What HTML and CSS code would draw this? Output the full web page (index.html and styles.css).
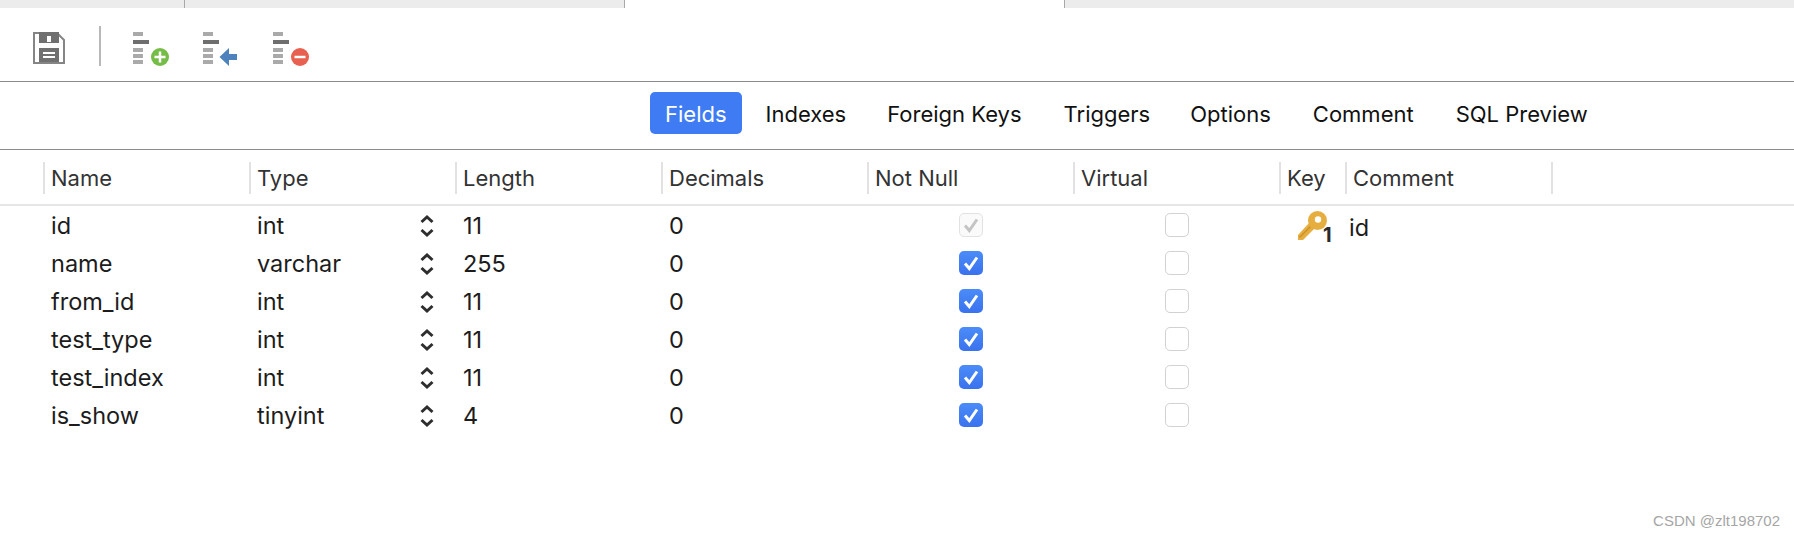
FILE: index.html
```html
<!DOCTYPE html>
<html lang="en">
<head>
    <meta charset="UTF-8">
    <meta name="viewport" content="width=device-width, initial-scale=1.0">
    <title>Table Design</title>
    <link rel="stylesheet" href="styles.css">
</head>
<body>
    <!-- shared icons -->
    <svg class="sprite" width="0" height="0">
        <defs>
            <symbol id="stepper" viewBox="0 0 16 24">
                <path d="M2.500 8 8 3l5.500 5M2.500 16 8 21l5.500-5" fill="none" stroke="#2e2e2e" stroke-width="3"/>
            </symbol>
            <symbol id="check" viewBox="0 0 24 24">
                <path d="M6 12.500 10.300 17.500 18 6.500" fill="none" stroke="currentColor" stroke-width="3"/>
            </symbol>
            <symbol id="bars" viewBox="0 0 16 32">
                <rect x="0" y="0" width="10" height="4" fill="#aaa"/>
                <rect x="0" y="8" width="16" height="4" fill="#6e6e6e"/>
                <rect x="0" y="16" width="10" height="4" fill="#aaa"/>
                <rect x="0" y="22" width="10" height="4" fill="#aaa"/>
                <rect x="0" y="28" width="10" height="4" fill="#aaa"/>
            </symbol>
        </defs>
    </svg>

    <div class="tab-strip">
        <div class="doc-tab tab-a"></div>
        <div class="doc-tab tab-b"></div>
        <div class="doc-tab active tab-c"></div>
        <div class="doc-tab tab-d"></div>
    </div>

    <div class="toolbar">
        <svg class="tool save" width="32" height="32" viewBox="0 0 32 32">
            <path d="M1 1H24L31 8V31H1Z" fill="#fff" stroke="#858585" stroke-width="2"/>
            <rect x="6" y="0" width="20" height="11" fill="#707070"/>
            <rect x="14" y="4" width="4" height="6" fill="#fff"/>
            <rect x="6" y="16" width="20" height="14" fill="#707070"/>
            <rect x="10" y="20" width="12" height="2" fill="#fff"/>
            <rect x="10" y="24" width="12" height="2" fill="#fff"/>
        </svg>
        <div class="tool-sep"></div>
        <svg class="tool add" width="36" height="34" viewBox="0 0 36 34">
            <use href="#bars" width="16" height="32"/>
            <circle cx="27" cy="25" r="9" fill="#76bd48"/>
            <path d="M27 19.500v11M21.500 25h11" stroke="#fff" stroke-width="2.500"/>
        </svg>
        <svg class="tool insert" width="34" height="34" viewBox="0 0 34 34">
            <use href="#bars" width="16" height="32"/>
            <path d="M16.500 25 26 16V22H34V28H26V34Z" fill="#4d82bd"/>
        </svg>
        <svg class="tool remove" width="36" height="34" viewBox="0 0 36 34">
            <use href="#bars" width="16" height="32"/>
            <circle cx="27" cy="25" r="9" fill="#e8604f"/>
            <path d="M21.500 25h11" stroke="#fff" stroke-width="2.500"/>
        </svg>
    </div>

    <div class="tab-bar">
        <div class="tab active">Fields</div>
        <div class="tab">Indexes</div>
        <div class="tab">Foreign Keys</div>
        <div class="tab">Triggers</div>
        <div class="tab">Options</div>
        <div class="tab">Comment</div>
        <div class="tab">SQL Preview</div>
    </div>

    <div class="grid-head">
        <div class="head-cell">Name</div>
        <div class="head-cell">Type</div>
        <div class="head-cell">Length</div>
        <div class="head-cell">Decimals</div>
        <div class="head-cell">Not Null</div>
        <div class="head-cell">Virtual</div>
        <div class="head-cell">Key</div>
        <div class="head-cell comment-head">Comment</div>
    </div>

    <div class="grid-body">
        <div class="row">
            <div class="cell">id</div>
            <div class="cell type-cell">int<svg class="stepper" width="16" height="24"><use href="#stepper"/></svg></div>
            <div class="cell">11</div>
            <div class="cell">0</div>
            <div class="cell center"><span class="box disabled"><svg width="24" height="24"><use href="#check"/></svg></span></div>
            <div class="cell center"><span class="box"></span></div>
            <div class="cell key-cell">
                <svg width="30" height="30" viewBox="0 0 30 30">
                    <path d="M12 11 0 24V29H5L18 16Z" fill="#e5ae3e"/>
                    <path d="M1.500 26.500 14 14" stroke="#c98f28" stroke-width="1.200"/>
                    <circle cx="19.500" cy="9.500" r="9.500" fill="#e5ae3e"/>
                    <circle cx="20" cy="8.500" r="3.200" fill="#fff"/>
                </svg>
                <span class="key-num">1</span>
            </div>
            <div class="cell comment-cell">id</div>
        </div>
        <div class="row">
            <div class="cell">name</div>
            <div class="cell type-cell">varchar<svg class="stepper" width="16" height="24"><use href="#stepper"/></svg></div>
            <div class="cell">255</div>
            <div class="cell">0</div>
            <div class="cell center"><span class="box checked"><svg width="24" height="24"><use href="#check"/></svg></span></div>
            <div class="cell center"><span class="box"></span></div>
        </div>
        <div class="row">
            <div class="cell">from_id</div>
            <div class="cell type-cell">int<svg class="stepper" width="16" height="24"><use href="#stepper"/></svg></div>
            <div class="cell">11</div>
            <div class="cell">0</div>
            <div class="cell center"><span class="box checked"><svg width="24" height="24"><use href="#check"/></svg></span></div>
            <div class="cell center"><span class="box"></span></div>
        </div>
        <div class="row">
            <div class="cell">test_type</div>
            <div class="cell type-cell">int<svg class="stepper" width="16" height="24"><use href="#stepper"/></svg></div>
            <div class="cell">11</div>
            <div class="cell">0</div>
            <div class="cell center"><span class="box checked"><svg width="24" height="24"><use href="#check"/></svg></span></div>
            <div class="cell center"><span class="box"></span></div>
        </div>
        <div class="row">
            <div class="cell">test_index</div>
            <div class="cell type-cell">int<svg class="stepper" width="16" height="24"><use href="#stepper"/></svg></div>
            <div class="cell">11</div>
            <div class="cell">0</div>
            <div class="cell center"><span class="box checked"><svg width="24" height="24"><use href="#check"/></svg></span></div>
            <div class="cell center"><span class="box"></span></div>
        </div>
        <div class="row">
            <div class="cell">is_show</div>
            <div class="cell type-cell">tinyint<svg class="stepper" width="16" height="24"><use href="#stepper"/></svg></div>
            <div class="cell">4</div>
            <div class="cell">0</div>
            <div class="cell center"><span class="box checked"><svg width="24" height="24"><use href="#check"/></svg></span></div>
            <div class="cell center"><span class="box"></span></div>
        </div>
    </div>

    <div class="watermark">CSDN @zlt198702</div>
</body>
</html>
```

FILE: styles.css
```css
html, body {
    height: 100%;
}
body {
    font-family: Inter, "Open Sans", sans-serif;
    font-size: 22px;
    color: #1c1c1c;
    margin: 0;
    padding: 0;
    background-color: #fff;
    overflow: hidden;
}
.sprite {
    display: block;
    height: 0;
}

/* window tabs along the top */
.tab-strip {
    display: flex;
    height: 8px;
    background-color: #ececec;
}
.doc-tab {
    border-right: 1px solid #a8a8a8;
}
.doc-tab.active {
    background-color: #fff;
}
.tab-a {
    width: 184px;
}
.tab-b {
    width: 439px;
}
.tab-c {
    width: 439px;
}
.tab-d {
    flex: 1;
    border-right: none;
}

.toolbar {
    display: flex;
    align-items: flex-start;
    height: 74px;
    box-sizing: border-box;
    padding: 24px 0 0 33px;
    border-bottom: 1px solid #8a8a8a;
}
.tool {
    flex: none;
}
.tool-sep {
    width: 2px;
    height: 40px;
    margin: -6px 32px 0 34px;
    background-color: #b8b8b8;
}
.insert {
    margin-left: 34px;
}
.remove {
    margin-left: 36px;
}

.tab-bar {
    display: flex;
    align-items: center;
    height: 68px;
    box-sizing: border-box;
    padding: 9px 0 15px 650px;
    border-bottom: 1px solid #8a8a8a;
}
.tab {
    padding: 0 15px;
    margin-right: 12px;
    height: 42px;
    line-height: 44px;
    color: #111;
    border-radius: 5px;
}
.tab.active {
    margin-right: 9px;
    background-color: #3f7cf4;
    color: #fff;
}
.tab:nth-child(2) {
    margin-right: 11px;
}
.tab:nth-child(4) {
    margin-right: 10px;
}

.grid-head, .row {
    display: grid;
    grid-template-columns: repeat(6, 206px) 66px 208px;
    padding-left: 43px;
}
.grid-head {
    height: 56px;
    box-sizing: border-box;
    padding-top: 12px;
    border-bottom: 2px solid #e6e6e6;
}
.head-cell {
    height: 32px;
    line-height: 32px;
    padding-left: 6px;
    border-left: 2px solid #e2e2e2;
    color: #333;
}
.comment-head {
    border-right: 2px solid #e2e2e2;
}
.grid-body {
    padding-top: 1px;
}
.row {
    height: 38px;
    align-items: center;
    font-size: 23.500px;
}
.cell {
    padding-left: 8px;
    line-height: 38px;
}
.type-cell {
    display: flex;
    align-items: center;
    justify-content: space-between;
    padding-right: 20px;
}
.center {
    display: flex;
    justify-content: center;
    padding-left: 2px;
}
.box {
    display: block;
    width: 24px;
    height: 24px;
    box-sizing: border-box;
    margin-bottom: 2px;
    border: 1px solid #d2d2d2;
    border-radius: 5px;
    background-color: #fff;
}
.box svg {
    display: block;
    margin: -1px;
}
.box.checked {
    border: none;
    background: linear-gradient(#4b8cf9, #3a72ee);
    color: #fff;
}
.box.checked svg {
    margin: 0;
}
.box.disabled {
    border-color: #e2e2e2;
    background-color: #fafafa;
    color: #c4c4c4;
}
.key-cell {
    display: flex;
    align-items: flex-start;
    padding-left: 19px;
    height: 38px;
    box-sizing: border-box;
    padding-top: 4px;
}
.key-num {
    position: relative;
    z-index: 1;
    margin-left: -5px;
    margin-top: 14px;
    font-size: 20px;
    font-weight: 700;
    line-height: 20px;
    color: #2a2a2a;
}
.comment-cell {
    padding-left: 4px;
    position: relative;
    top: 2px;
}

.watermark {
    display: flex;
    justify-content: flex-end;
    padding: 77px 14px 0 0;
    font-family: "Liberation Sans", Arial, sans-serif;
    font-size: 15px;
    color: #a6a6a6;
}
```
